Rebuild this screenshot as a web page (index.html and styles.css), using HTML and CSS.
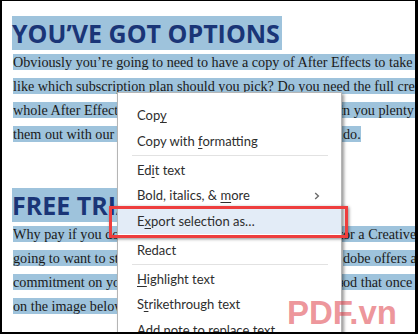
FILE: index.html
```html
<!DOCTYPE html>
<html>
<head>
<meta charset="utf-8">
<link rel="stylesheet" href="styles.css">
</head>
<body>
<div class="frame">
  <div class="doc">
    <h1 class="hd">YOU’VE GOT OPTIONS</h1>
    <div class="para">
      <div class="ln"><span class="hl">Obviously you’re going to need to have a copy of After Effects to take the tutorials.</span></div>
      <div class="ln"><span class="hl">like which subscription plan should you pick? Do you need the full creative suite or the</span></div>
      <div class="ln split"><div class="seg"><span class="hl">whole After Effects package? Below we’ll walk through the options and give the</span></div><div class="rest"><span class="hl">n you plenty of reasons to try</span></div></div>
      <div class="ln split"><div class="seg"><span class="hl">them out with our free trial and see what After Effects can really</span></div><div class="rest"><span class="hl">do.</span></div></div>
    </div>
    <h1 class="hd hd2">FREE TRIAL</h1>
    <div class="para">
      <div class="ln split"><div class="seg"><span class="hl">Why pay if you don’t have to? Before you shell out for a subscription f</span></div><div class="rest"><span class="hl">or a Creative Cloud plan</span></div></div>
      <div class="ln split"><div class="seg"><span class="hl">going to want to start with the free trial version that A</span></div><div class="rest"><span class="hl">dobe offers at no cost</span></div></div>
      <div class="ln split"><div class="seg"><span class="hl">commitment on your part, and it runs for the whole trial peri</span></div><div class="rest"><span class="hl">od that once you</span></div></div>
      <div class="ln"><span class="hl">on the image below to get started with your trial.</span></div>
    </div>
  </div>

  <div class="menu">
    <div class="item">Cop<u>y</u></div>
    <div class="item">Copy with <u>f</u>ormatting</div>
    <div class="sep"></div>
    <div class="item">Ed<u>i</u>t text</div>
    <div class="item has-sub"><span>Bold, italics, &amp; <u>m</u>ore</span><svg class="chev" width="6" height="8" viewBox="0 0 6 8"><polyline points="1.2,1 4.4,4 1.2,7" fill="none" stroke="#6b6b6b" stroke-width="1.4"/></svg></div>
    <div class="item active">E<u>x</u>port selection as…</div>
    <div class="sep"></div>
    <div class="item">Redact</div>
    <div class="sep"></div>
    <div class="item"><u>H</u>ighlight text</div>
    <div class="item">S<u>t</u>rikethrough text</div>
    <div class="item">Add note to replace text</div>
  </div>

  <div class="callout"></div>
  <div class="mark">PDF.vn</div>
</div>
</body>
</html>
```
FILE: styles.css
```css
html, body {
  margin: 0;
  padding: 0;
  background: #ffffff;
}

.frame {
  position: relative;
  width: 418px;
  height: 334px;
  box-sizing: border-box;
  border-style: solid;
  border-color: #000000;
  border-width: 1px 3px 2px 2px;
  overflow: hidden;
  background: #ffffff;
}

.doc {
  padding: 15px 0 0 10px;
}

.hd {
  margin: 0;
  width: max-content;
  height: 34px;
  line-height: 34px;
  padding-right: 2px;
  background: #9ec3dc;
  color: #1a3577;
  font-family: "Open Sans", "Noto Sans", sans-serif;
  font-weight: 700;
  font-size: 25px;
  white-space: nowrap;
}

.hd2 {
  margin-top: 42px;
}

.para {
  margin-left: 1px;
}

.ln {
  height: 24px;
  line-height: 24px;
  white-space: nowrap;
  font-family: "Liberation Serif", "DejaVu Serif", serif;
  font-size: 14.2px;
  color: #1a1a1a;
}

.hl {
  background: #9ec3dc;
}

.split {
  display: flex;
}

.seg {
  flex: none;
  width: 330px;
  overflow: hidden;
}

.rest {
  flex: none;
}

.menu {
  position: absolute;
  left: 115px;
  top: 91px;
  width: 225px;
  height: 270px;
  box-sizing: border-box;
  background: #ffffff;
  border: 1px solid #b5b5b5;
  box-shadow: 2px 2px 3px rgba(0, 0, 0, 0.4);
  padding-top: 10px;
  font-family: "Lato", "Open Sans", sans-serif;
  font-size: 13px;
  color: #2e2e2e;
}

.item {
  height: 25.5px;
  line-height: 25.5px;
  padding-left: 19px;
  padding-right: 21px;
  white-space: nowrap;
}

.item u {
  text-decoration-thickness: 1px;
  text-underline-offset: 2px;
}

.has-sub {
  display: flex;
  justify-content: space-between;
  align-items: center;
}

.chev {
  display: block;
}

.active {
  background: #e3ecf7;
}

.sep {
  height: 1px;
  margin: 0.5px 13px 2px 14px;
  background: #e2e2e2;
}

.callout {
  position: absolute;
  left: 107px;
  top: 205px;
  width: 239px;
  height: 32px;
  box-sizing: border-box;
  border: 3px solid #ee3e3e;
  box-shadow: 1px 1px 3px rgba(0, 0, 0, 0.45);
}

.mark {
  position: absolute;
  left: 285px;
  top: 295px;
  line-height: 33px;
  font-family: "Liberation Sans", Arial, sans-serif;
  font-weight: 700;
  font-size: 33px;
  color: rgba(222, 60, 70, 0.55);
  white-space: nowrap;
}
```
